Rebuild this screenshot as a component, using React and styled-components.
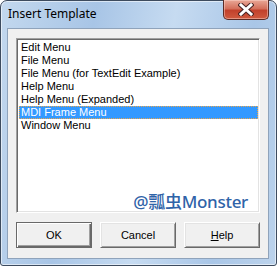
import React from "react";
import styled, { createGlobalStyle } from "styled-components";

const Global = createGlobalStyle`
  html, body { margin: 0; padding: 0; background: #ffffff; }
  body { width: 277px; height: 266px; overflow: hidden; }
`;

const Window = styled.div`
  box-sizing: border-box;
  width: 277px;
  height: 266px;
  border: 1px solid #3d4b5e;
  border-radius: 7px 7px 3px 3px;
  background: linear-gradient(100deg, #c3d8ee 0%, #a8c5e6 30%, #c6dbf1 55%, #a9c6e7 80%, #bcd3ec 100%);
  box-shadow: inset 0 0 0 1px rgba(255, 255, 255, 0.55);
  display: flex;
  flex-direction: column;
  padding: 0 7px 6px 6px;
`;

const TitleBar = styled.div`
  height: 28px;
  display: flex;
  align-items: center;
  justify-content: space-between;
  padding-left: 1px;
`;

const Title = styled.div`
  font-family: "Segoe UI", "Noto Sans", sans-serif;
  font-size: 12px;
  color: #000;
  margin-top: -2px;
`;

const CloseButton = styled.div`
  box-sizing: border-box;
  width: 46px;
  height: 20px;
  align-self: flex-start;
  margin-top: -1px;
  margin-right: 0px;
  border: 1px solid #5b2b26;
  border-top: none;
  border-radius: 0 0 5px 5px;
  background: linear-gradient(#e9a897 0%, #d4705c 45%, #c2412c 55%, #cf5a3f 100%);
  box-shadow: inset 0 0 0 1px rgba(255, 220, 210, 0.45);
  display: flex;
  align-items: center;
  justify-content: center;
`;

const Client = styled.div`
  flex: 1;
  box-sizing: border-box;
  background: #f0f0f0;
  border: 1px solid #8fa3bb;
  display: flex;
  flex-direction: column;
  padding: 9px 8px 10px 8px;
`;

const ListBox = styled.div`
  position: relative;
  box-sizing: border-box;
  height: 175px;
  background: #fff;
  border-top: 1px solid #a0a0a0;
  border-left: 1px solid #a0a0a0;
  border-right: 1px solid #fff;
  border-bottom: 1px solid #fff;
  box-shadow: inset 1px 1px 0 #696969, inset -1px -1px 0 #e3e3e3;
  padding: 2px 1px 1px 2px;
  display: flex;
  flex-direction: column;
  font-family: "Liberation Sans", Arial, sans-serif;
  font-size: 11px;
`;

const Item = styled.div`
  box-sizing: border-box;
  height: 13px;
  line-height: 11px;
  padding-left: 1px;
  white-space: nowrap;
  color: ${(p) => (p.$selected ? "#fff" : "#000")};
  background: ${(p) => (p.$selected ? "#3399ff" : "transparent")};
  border: 1px ${(p) => (p.$selected ? "dotted #e9a54a" : "solid transparent")};
`;

const Watermark = styled.div`
  position: absolute;
  right: 11px;
  bottom: 0px;
  font-family: "Noto Sans", "Noto Sans CJK SC", sans-serif;
  font-size: 17px;
  font-weight: 500;
  line-height: 20px;
  color: #2f63a8;
  letter-spacing: -0.3px;
`;

const Buttons = styled.div`
  display: flex;
  gap: 8px;
  margin-top: 9px;
`;

const Button = styled.div`
  box-sizing: border-box;
  width: 76px;
  height: 26px;
  background: #f0f0f0;
  display: flex;
  align-items: center;
  justify-content: center;
  font-family: "Liberation Sans", Arial, sans-serif;
  font-size: 11px;
  color: #000;
  border-top: 1px solid ${(p) => (p.$default ? "#696969" : "#ffffff")};
  border-left: 1px solid ${(p) => (p.$default ? "#696969" : "#ffffff")};
  border-right: 1px solid #696969;
  border-bottom: 1px solid #696969;
  box-shadow: ${(p) =>
    p.$default
      ? "inset 1px 1px 0 #ffffff, inset -1px -1px 0 #696969, inset -2px -2px 0 #a0a0a0"
      : "inset 1px 1px 0 #e3e3e3, inset -1px -1px 0 #a0a0a0"};
  u { text-decoration: underline; }
`;

const items = [
  "Edit Menu",
  "File Menu",
  "File Menu (for TextEdit Example)",
  "Help Menu",
  "Help Menu (Expanded)",
  "MDI Frame Menu",
  "Window Menu",
];

export default function App() {
  return (
    <>
      <Global />
      <Window>
        <TitleBar>
          <Title>Insert Template</Title>
          <CloseButton>
            <svg width="16" height="13" viewBox="0 0 16 13">
              <path
                d="M3 2 L13 11 M13 2 L3 11"
                stroke="#4a2424"
                strokeWidth="5"
                strokeLinecap="square"
                fill="none"
              />
              <path
                d="M3 2 L13 11 M13 2 L3 11"
                stroke="#ffffff"
                strokeWidth="3"
                strokeLinecap="square"
                fill="none"
              />
            </svg>
          </CloseButton>
        </TitleBar>
        <Client>
          <ListBox>
            {items.map((t) => (
              <Item key={t} $selected={t === "MDI Frame Menu"}>
                {t}
              </Item>
            ))}
            <Watermark>@瓢虫Monster</Watermark>
          </ListBox>
          <Buttons>
            <Button $default>OK</Button>
            <Button>Cancel</Button>
            <Button>
              <u>H</u>elp
            </Button>
          </Buttons>
        </Client>
      </Window>
    </>
  );
}
